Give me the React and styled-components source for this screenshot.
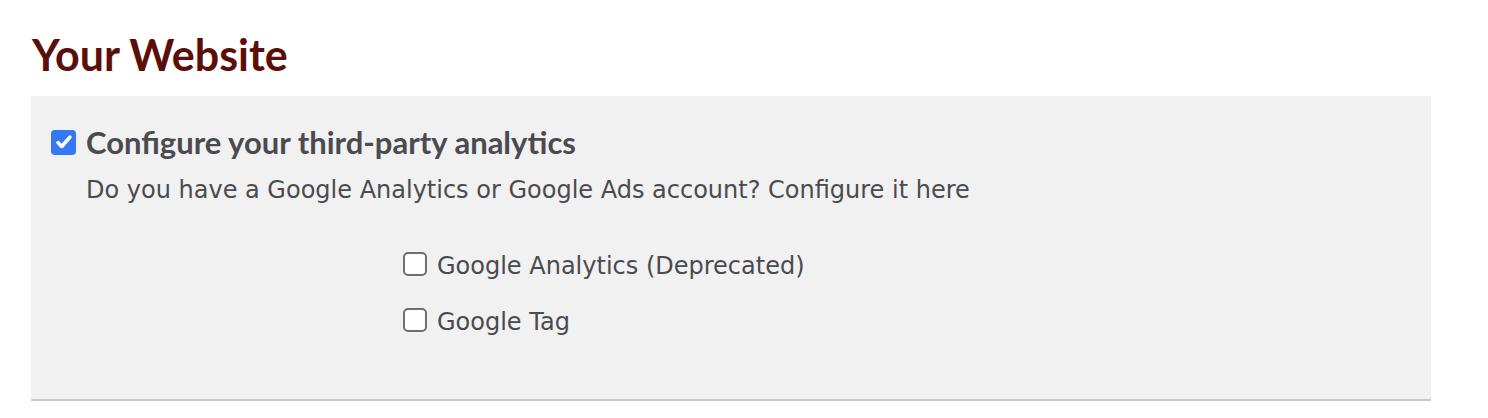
import React, { useState } from "react"
import styled, { createGlobalStyle } from "styled-components"

const GlobalStyle = createGlobalStyle`
  body {
    margin: 0;
    background: #fff;
    font-family: "DejaVu Sans", Verdana, sans-serif;
  }
`

const Page = styled.div`
  padding: 26px 57px 0 31px;
`

const Title = styled.h1`
  margin: 0 0 12px 1px;
  font-family: Lato, "Open Sans", sans-serif;
  font-weight: 700;
  font-size: 43px;
  line-height: 58px;
  color: #5c0f08;
`

const Panel = styled.section`
  background: #f1f1f1;
  border-bottom: 2px solid #c9c9c9;
  padding: 26px 20px 0 20px;
  height: 305px;
  box-sizing: border-box;
`

const MainRow = styled.label`
  display: flex;
  align-items: center;
  gap: 10px;
  cursor: pointer;
`

const BlueBox = styled.span`
  width: 25px;
  height: 25px;
  border-radius: 4px;
  background: #3478f6;
  display: flex;
  align-items: center;
  justify-content: center;
  flex-shrink: 0;
`

const MainLabel = styled.span`
  font-family: Lato, "Open Sans", sans-serif;
  font-weight: 700;
  font-size: 31px;
  color: #4a4a4f;
  line-height: 40px;
`

const Hint = styled.p`
  margin: 13px 0 0 35px;
  font-size: 24px;
  color: #4a4a4f;
  line-height: 30px;
`

const Options = styled.div`
  margin: 46px 0 0 352px;
  display: flex;
  flex-direction: column;
  gap: 26px;
`

const OptionRow = styled.label`
  display: flex;
  align-items: center;
  gap: 10px;
  font-size: 24px;
  color: #4a4a4f;
  line-height: 30px;
  cursor: pointer;
`

const Box = styled.span`
  width: 24px;
  height: 24px;
  box-sizing: border-box;
  border: 2px solid #6f6f6f;
  border-radius: 5px;
  background: #fff;
  flex-shrink: 0;
  margin-top: -4px;
`

const Option = ({ children }) => (
  <OptionRow>
    <Box />
    {children}
  </OptionRow>
)

export default function App() {
  const [on, setOn] = useState(true)
  return (
    <Page>
      <GlobalStyle />
      <Title>Your Website</Title>
      <Panel>
        <MainRow onClick={() => setOn(!on)}>
          <BlueBox>
            {on && (
              <svg width="20" height="20" viewBox="0 0 16 16">
                <path
                  d="M3.2 8.4l3 3.2L12.8 4"
                  fill="none"
                  stroke="#fff"
                  strokeWidth="2.8"
                  strokeLinecap="round"
                  strokeLinejoin="round"
                />
              </svg>
            )}
          </BlueBox>
          <MainLabel>Configure your third-party analytics</MainLabel>
        </MainRow>
        <Hint>
          Do you have a Google Analytics or Google Ads account? Configure it here
        </Hint>
        <Options>
          <Option>Google Analytics (Deprecated)</Option>
          <Option>Google Tag</Option>
        </Options>
      </Panel>
    </Page>
  )
}
